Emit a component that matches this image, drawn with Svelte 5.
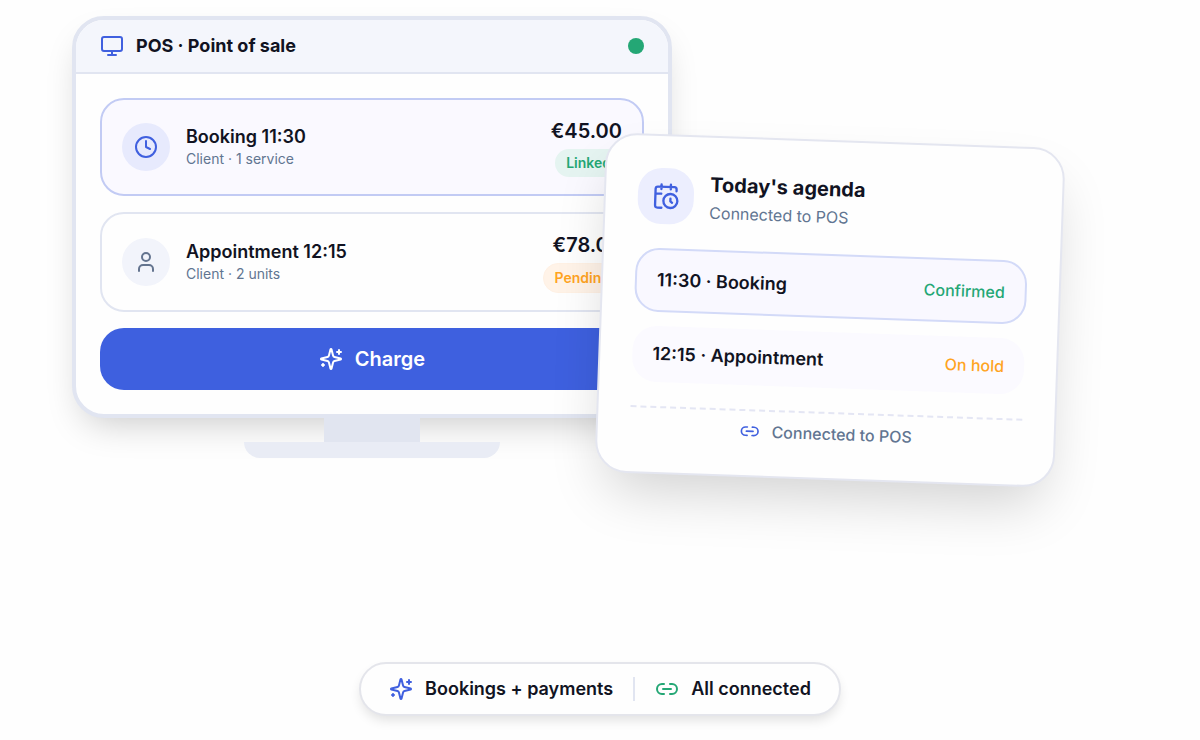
<script>
  const sales = [
    { title: 'Booking 11:30', detail: 'Client · 1 service', price: '€45.00', badge: 'Linked', state: 'linked', icon: 'clock' },
    { title: 'Appointment 12:15', detail: 'Client · 2 units', price: '€78.00', badge: 'Pending', state: 'pending', icon: 'user' }
  ];

  const agenda = [
    { title: '11:30 · Booking', status: 'Confirmed', state: 'confirmed' },
    { title: '12:15 · Appointment', status: 'On hold', state: 'hold' }
  ];
</script>

{#snippet icon(name)}
  <svg class="icon {name}" viewBox="0 0 24 24" aria-hidden="true">
    {#if name === 'monitor'}
      <rect x="2" y="3" width="20" height="14" rx="2" />
      <path d="M8 21h8M12 17v4" />
    {:else if name === 'clock'}
      <circle cx="12" cy="12" r="10" />
      <path d="M12 6v6l4 2" />
    {:else if name === 'user'}
      <path d="M19 21v-2a4 4 0 0 0-4-4H9a4 4 0 0 0-4 4v2" />
      <circle cx="12" cy="7" r="4" />
    {:else if name === 'sparkles'}
      <path d="M9.937 15.5A2 2 0 0 0 8.5 14.063l-6.135-1.582a.5.5 0 0 1 0-.962L8.5 9.936A2 2 0 0 0 9.937 8.5l1.582-6.135a.5.5 0 0 1 .963 0L14.063 8.5A2 2 0 0 0 15.5 9.937l6.135 1.581a.5.5 0 0 1 0 .964L15.5 14.063a2 2 0 0 0-1.437 1.437l-1.582 6.135a.5.5 0 0 1-.963 0z" />
      <path d="M20 3v4M22 5h-4M4 17v2M5 18H3" />
    {:else if name === 'link'}
      <path d="M9 17H7A5 5 0 0 1 7 7h2M15 7h2a5 5 0 1 1 0 10h-2M8 12h8" />
    {:else if name === 'calendar'}
      <path d="M21 7.5V6a2 2 0 0 0-2-2H5a2 2 0 0 0-2 2v14a2 2 0 0 0 2 2h3.5M16 2v4M8 2v4M3 10h5M17.5 17.5 16 16.3V14" />
      <circle cx="16" cy="16" r="6" />
    {/if}
  </svg>
{/snippet}

<main>
  <div class="stage">
    <section class="pos">
      <div class="screen">
        <header>
          {@render icon('monitor')}
          <h2>POS · Point of sale</h2>
          <span class="dot"></span>
        </header>
        <div class="sales">
          {#each sales as sale}
            <article class="sale {sale.state}">
              <span class="avatar">{@render icon(sale.icon)}</span>
              <div class="info">
                <h3>{sale.title}</h3>
                <p>{sale.detail}</p>
              </div>
              <div class="amount">
                <strong>{sale.price}</strong>
                <span class="badge">{sale.badge}</span>
              </div>
            </article>
          {/each}
          <button type="button">
            {@render icon('sparkles')}
            Charge
          </button>
        </div>
      </div>
      <div class="neck"></div>
      <div class="base"></div>
    </section>

    <section class="agenda">
      <div class="heading">
        <span class="calbox">{@render icon('calendar')}</span>
        <div>
          <h2>Today's agenda</h2>
          <p>Connected to POS</p>
        </div>
      </div>
      <ul>
        {#each agenda as item}
          <li class={item.state}>
            <span>{item.title}</span>
            <em>{item.status}</em>
          </li>
        {/each}
      </ul>
      <footer>
        {@render icon('link')}
        Connected to POS
      </footer>
    </section>
  </div>

  <div class="pill">
    <span class="feature">{@render icon('sparkles')} Bookings + payments</span>
    <span class="divider"></span>
    <span class="feature green">{@render icon('link')} All connected</span>
  </div>
</main>

<style>
  :global(body) {
    background: #fefefe;
  }

  main {
    box-sizing: border-box;
    min-height: 100vh;
    display: flex;
    flex-direction: column;
    justify-content: space-between;
    align-items: center;
    padding: 16px 6% 24px;
    overflow: hidden;
    color: #111322;
    font-family: Inter, sans-serif;
    font-size: 18px;
    line-height: 24px;
  }

  h2, h3, p, ul {
    margin: 0;
    padding: 0;
  }

  .icon {
    display: block;
    flex: none;
    width: 24px;
    height: 24px;
    fill: none;
    stroke: #4060df;
    stroke-width: 2;
    stroke-linecap: round;
    stroke-linejoin: round;
  }

  .stage {
    width: 100%;
    display: flex;
    align-items: flex-start;
  }

  .pos {
    flex: 0 1 600px;
    display: flex;
    flex-direction: column;
    align-items: center;
  }

  .screen {
    box-sizing: border-box;
    width: 100%;
    border: 4px solid #e1e5f1;
    border-radius: 32px;
    overflow: hidden;
    background: #fefefe;
    box-shadow: 0 16px 36px -12px rgba(0, 0, 0, 0.22);
  }

  header {
    display: flex;
    align-items: center;
    gap: 12px;
    padding: 14px 24px;
    border-bottom: 2px solid #e1e5f1;
    background: #f4f6fc;
  }

  header h2 {
    flex: 1;
    font-size: 18px;
    font-weight: 700;
  }

  .dot {
    width: 16px;
    height: 16px;
    border-radius: 50%;
    background: #24a775;
  }

  .sales {
    display: flex;
    flex-direction: column;
    gap: 16px;
    padding: 24px;
  }

  .sale {
    display: flex;
    align-items: center;
    gap: 16px;
    padding: 17px 20px;
    border: 2px solid #e1e5f1;
    border-radius: 24px;
  }

  .sale.linked {
    border-color: #c2cbf4;
    background: #faf9ff;
  }

  .avatar {
    display: flex;
    align-items: center;
    justify-content: center;
    width: 48px;
    height: 48px;
    border-radius: 50%;
    background: #f2f4fb;
  }

  .linked .avatar {
    background: #e7eafd;
  }

  .avatar .user {
    stroke: #64748f;
  }

  .info {
    flex: 1;
  }

  h3 {
    font-size: 18px;
    font-weight: 600;
  }

  .info p {
    color: #617591;
    font-size: 14px;
    line-height: 20px;
  }

  .amount {
    display: flex;
    flex-direction: column;
    align-items: flex-end;
    gap: 4px;
  }

  .amount strong {
    font-size: 20px;
    font-weight: 600;
    line-height: 28px;
  }

  .badge {
    padding: 4px 11px;
    border-radius: 16px;
    background: #e5f4f1;
    color: #24a775;
    font-size: 14px;
    font-weight: 600;
    line-height: 20px;
  }

  .pending .badge {
    border: 1px solid #fff1e4;
    background: #fff3e8;
    color: #ffa41f;
  }

  button {
    display: flex;
    align-items: center;
    justify-content: center;
    gap: 12px;
    padding: 17px 24px;
    border: 0;
    border-radius: 24px;
    background: #3e60df;
    color: #fff;
    font: 600 20px/28px Inter, sans-serif;
    cursor: pointer;
  }

  button .icon {
    stroke: #fff;
  }

  .neck {
    width: 96px;
    height: 24px;
    background: #e1e5f0;
    z-index: 1;
  }

  .base {
    width: 256px;
    height: 16px;
    border-radius: 0 0 16px 16px;
    background: #e9ecf5;
    z-index: 1;
  }

  /* overlaps the right edge of the monitor */
  .agenda {
    box-sizing: border-box;
    flex: 0 1 460px;
    margin: 124px 0 0 -72px;
    padding: 32px;
    border: 2px solid #e4e6f0;
    border-radius: 32px;
    background: #fefefe;
    box-shadow: 0 28px 56px -12px rgba(0, 0, 0, 0.18);
    transform: rotate(2deg);
    z-index: 2;
  }

  .heading {
    display: flex;
    align-items: center;
    gap: 16px;
  }

  .calbox {
    display: flex;
    align-items: center;
    justify-content: center;
    width: 56px;
    height: 56px;
    border-radius: 24px;
    background: #eceefe;
  }

  .calbox .icon {
    width: 28px;
    height: 28px;
  }

  .heading h2 {
    font-size: 20px;
    font-weight: 700;
    line-height: 28px;
  }

  .heading p {
    margin-top: 2px;
    color: #617591;
    font-size: 16px;
  }

  ul {
    display: flex;
    flex-direction: column;
    gap: 14px;
    margin: 24px 0;
    list-style: none;
  }

  li {
    display: flex;
    align-items: center;
    justify-content: space-between;
    padding: 16px 20px;
    border-radius: 24px;
    background: #fbfaff;
    font-weight: 600;
  }

  li.confirmed {
    padding: 18px 20px;
    border: 2px solid #d3daf8;
    background: #f9f8ff;
  }

  em {
    color: #ffa41f;
    font-size: 16px;
    font-style: normal;
    font-weight: 500;
  }

  .confirmed em {
    color: #24a775;
  }

  footer {
    display: flex;
    align-items: center;
    justify-content: center;
    gap: 12px;
    padding-top: 8px;
    border-top: 2px dashed #e4e6f4;
    color: #617591;
    font-size: 16px;
    font-weight: 500;
  }

  footer .icon {
    width: 20px;
    height: 20px;
  }

  .pill {
    display: flex;
    align-items: center;
    gap: 20px;
    padding: 13px 28px;
    border: 2px solid #e4e5eb;
    border-radius: 28px;
    background: #fefefe;
    box-shadow: 0 6px 12px -2px rgba(0, 0, 0, 0.12);
  }

  .feature {
    display: flex;
    align-items: center;
    gap: 12px;
    font-weight: 600;
  }

  .green .icon {
    stroke: #24a775;
  }

  .divider {
    width: 2px;
    height: 24px;
    background: #e1e5f1;
  }
</style>
